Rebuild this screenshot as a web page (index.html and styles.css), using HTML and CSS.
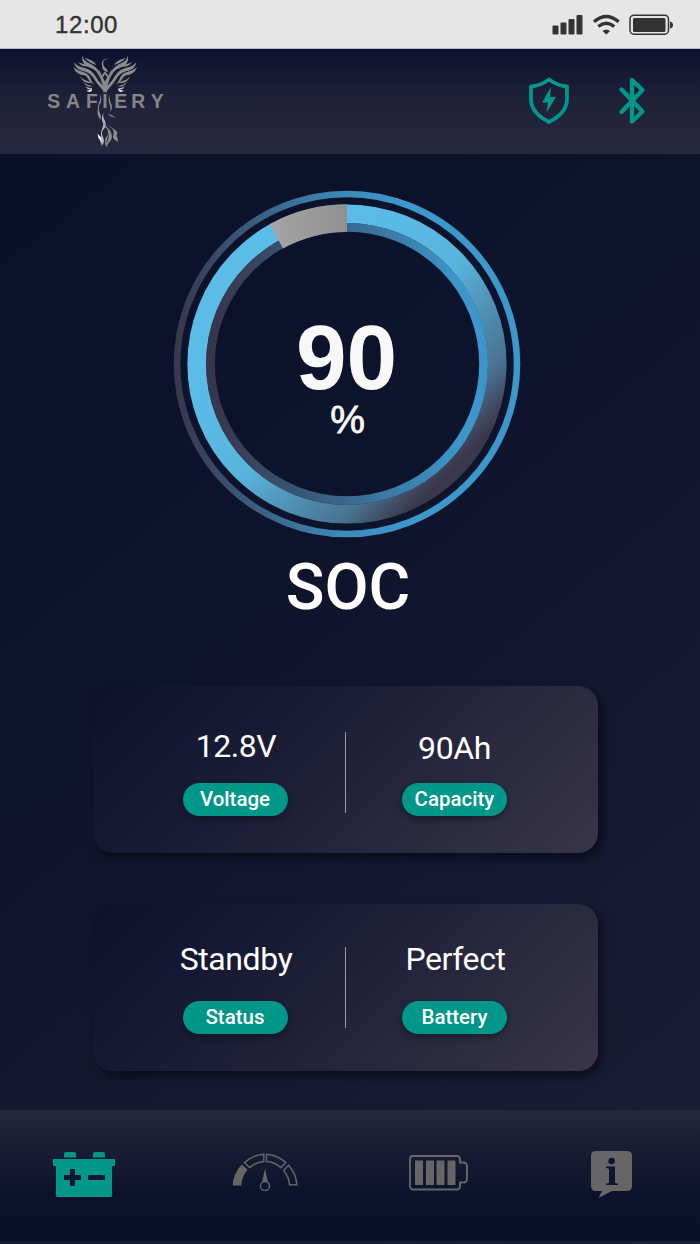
FILE: index.html
```html
<!DOCTYPE html>
<html lang="en">
<head>
    <meta charset="UTF-8">
    <meta name="viewport" content="width=device-width, initial-scale=1.0">
    <title>Safiery Battery</title>
    <link rel="stylesheet" href="styles.css">
</head>
<body>
    <div class="status-bar">
        <span class="time">12:00</span>
        <svg class="status-icons" width="122" height="22" viewBox="0 0 122 22">
            <g fill="#333">
                <rect x="0.5" y="12.5" width="6" height="9" rx="1"/>
                <rect x="8.5" y="9.5" width="6" height="12" rx="1"/>
                <rect x="16.5" y="6" width="6" height="15.5" rx="1"/>
                <rect x="24.5" y="2" width="6" height="19.5" rx="1"/>
                <path d="M50.500 18q3.800-3 7.600 0l-3.800 3.500z"/>
                <rect x="81" y="5" width="32.500" height="14" rx="1.500"/>
                <path d="M118 8.500q3 .8 3 3.500t-3 3.500z"/>
            </g>
            <g fill="none" stroke="#333">
                <path d="M42 8.800Q54.300-1.800 66.600 8.800" stroke-width="3.400"/>
                <path d="M46.300 13.500Q54.300 7.200 62.300 13.500" stroke-width="3.400"/>
                <rect x="78" y="2.200" width="38.500" height="19" rx="4" stroke-width="1.500"/>
            </g>
        </svg>
    </div>

    <header class="header">
        <svg class="logo" width="150" height="104" viewBox="0 12 450 312">
            <defs>
                <!-- one wing, mirrored for the other side -->
                <g id="wing">
                    <path d="M158 30C158 52 182 54 195 65C211 78 212 94 222 116C207 98 206 83 190 73C172 63 151 58 158 30z"/>
                    <path d="M132 52C145 69 166 66 180 76C199 89 206 117 226 137C202 127 193 93 174 83C153 76 138 76 132 52z"/>
                    <path d="M164 38C176 43 192 46 199 60C186 55 174 51 164 38z"/>
                    <path d="M130 65C146 81 163 78 173 88C184 98 181 108 194 119C173 111 176 95 163 91C149 88 137 86 130 65z"/>
                    <path d="M144 51C156 58 172 57 183 66C169 66 154 65 144 51z"/>
                    <path d="M205 73C218 87 214 107 225 117C231 128 228 137 222 144C215 124 198 113 191 99C205 105 213 116 219 122C211 105 212 90 205 73z"/>
                    <path d="M151 93C159 107 175 107 187 114C171 116 156 110 151 93z"/>
                    <path d="M160 108C165 120 179 120 188 124C175 128 164 122 160 108z"/>
                    <path d="M167 123C171 130 181 128 187 132C177 136 169 132 167 123z" fill="#bbb"/>
                    <path d="M168 137Q182 137 185 130Q189 140 178 141z" fill="#eee"/>
                </g>
            </defs>
            <g class="bird">
                <use href="#wing"/>
                <use href="#wing" transform="translate(451 0) scale(-1 1)"/>
                <!-- head and neck -->
                <path d="M242 43C234 41 224 42 220 50C218 59 223 67 231 73L234 82C225 79 216 76 217 64L215 56C216 45 228 38 242 43z"/>
                <path d="M225 79L239 96L225 123L211 96zM225 88L218 97L225 110L232 97z" fill-rule="evenodd"/>
                <path d="M211 147Q213 163 206 177Q200 190 208 201Q203 184 212 174Q216 163 211 147zM239 147Q236 162 244 178Q249 190 241 200Q243 185 238 175Q233 163 239 147z"/>
                <path d="M208 179C201 203 219 208 211 224C205 214 197 204 208 179zM235 204C238 211 250 209 257 219C247 214 236 215 235 204z"/>
                <path d="M225 198C210 218 231 226 227 244C224 253 212 256 217 271C223 285 225 292 214 304C220 291 203 283 203 266C207 275 214 275 214 275C209 255 223 247 219 235C214 220 214 212 225 198z" fill="#b8b8b8"/>
                <path d="M219 228C218 248 239 248 233 267C229 280 220 281 229 307C236 287 249 286 245 269C243 252 226 246 219 228zM232 233C239 252 256 249 250 270C245 282 256 284 263 291C267 276 254 275 263 264C258 251 240 250 232 233z"/>
                <path d="M203 266Q214 276 214 288L213 303Q214 287 206 280z" fill="#fff"/>
                <path d="M234 264Q237 275 230 293" fill="none" stroke="#24263c" stroke-width="3"/>
            </g>
            <text class="logo-text" y="190" x="52 108 168 217 253 304 362">SAFIERY</text>
        </svg>
        <div class="header-icons">
            <svg width="42" height="48" viewBox="0 0 42 48">
                <path d="M21 2.500Q30 9 39 9.500V22Q39 36 21 45Q3 36 3 22V9.500Q12 9 21 2.500z" fill="none" stroke="#009688" stroke-width="3.800" stroke-linejoin="round"/>
                <path d="M23 10L14 25.500H20L18.500 35.500L28 20H22z" fill="#009688"/>
            </svg>
            <svg width="28" height="48" viewBox="0 0 28 48">
                <path d="M3.500 12.500L24.500 34.500L14 44.500V3L24.500 13L3.500 35" fill="none" stroke="#009688" stroke-width="4.400" stroke-linecap="round" stroke-linejoin="round"/>
            </svg>
        </div>
    </header>

    <main class="content">
        <!-- state of charge dial -->
        <div class="dial">
            <svg width="348" height="348" viewBox="-174 -174 348 348">
                <defs>
                    <linearGradient id="outer" gradientUnits="userSpaceOnUse" x1="-174" y1="0" x2="60" y2="0">
                        <stop offset="0" stop-color="#38364d"/>
                        <stop offset="0.1" stop-color="#38405a"/>
                        <stop offset="0.72" stop-color="#3c8ab8"/>
                        <stop offset="1" stop-color="#3c98cb"/>
                    </linearGradient>
                    <linearGradient id="inner" gradientUnits="userSpaceOnUse" x1="-132" y1="0" x2="110" y2="0">
                        <stop offset="0" stop-color="#38364d"/>
                        <stop offset="0.55" stop-color="#3a698f"/>
                        <stop offset="1" stop-color="#3c96c9"/>
                    </linearGradient>
                    <linearGradient id="charge" gradientUnits="userSpaceOnUse" x1="-70" y1="-70" x2="104" y2="104">
                        <stop offset="0" stop-color="#5bbce8"/>
                        <stop offset="0.42" stop-color="#59b4dd"/>
                        <stop offset="0.84" stop-color="#48728f"/>
                        <stop offset="1" stop-color="#3b384d"/>
                    </linearGradient>
                    <linearGradient id="rest">
                        <stop offset="0" stop-color="#a5a5a5"/>
                        <stop offset="1" stop-color="#909090"/>
                    </linearGradient>
                </defs>
                <circle r="170" fill="none" stroke="url(#outer)" stroke-width="6.600"/>
                <circle r="150.200" fill="none" stroke="url(#charge)" stroke-width="18.800"/>
                <circle r="136.600" fill="none" stroke="url(#inner)" stroke-width="8.800"/>
                <path d="M-77.300-139.800A159.700 159.700 0 0 1 0-159.700V-132.100A132.100 132.100 0 0 0-63.900-115.600z" fill="url(#rest)"/>
            </svg>
            <div class="dial-value">
                <span class="number">90</span>
                <span class="unit">%</span>
            </div>
        </div>
        <h1 class="dial-title">SOC</h1>

        <section class="card">
            <div class="item">
                <span class="value voltage">12.8V</span>
                <span class="pill">Voltage</span>
            </div>
            <div class="divider"></div>
            <div class="item">
                <span class="value amps">90Ah</span>
                <span class="pill">Capacity</span>
            </div>
        </section>

        <section class="card">
            <div class="item">
                <span class="value word">Standby</span>
                <span class="pill">Status</span>
            </div>
            <div class="divider second"></div>
            <div class="item">
                <span class="value word">Perfect</span>
                <span class="pill">Battery</span>
            </div>
        </section>
    </main>

    <nav class="tab-bar">
        <svg class="tab tab-battery" width="64" height="48" viewBox="0 0 64 48">
            <path fill="#009688" fill-rule="evenodd" d="M1 9H63V16H60V45.500Q60 47 58.500 47H5.500Q4 47 4 45.500V16H1zM18 19V25H13Q12 25 12 26V29Q12 30 13 30H18V35Q18 36 19 36H22Q23 36 23 35V30H28Q29 30 29 29V26Q29 25 28 25H23V20Q23 19 22 19H19Q18 19 18 20zM37 25Q36 25 36 26V29Q36 30 37 30H52Q53 30 53 29V26Q53 25 52 25z"/>
            <path fill="#009688" d="M12 7.500V4Q12 2 14 2H22Q24 2 24 4V7.500zM41 7.500V4Q41 2 43 2H51Q53 2 53 4V7.500z"/>
        </svg>
        <svg class="tab tab-gauge" width="68" height="40" viewBox="0 0 68 40">
            <g fill="none" stroke="#666" stroke-width="1.500">
                <path d="M13.400 11.600A32 32 0 0 1 32.800 3.200V10.600A24 24 0 0 0 18.600 16.600z"/>
                <path d="M35.500 3.200A32 32 0 0 1 54.800 11.600L49.700 16.600A24 24 0 0 0 35.500 10.600z"/>
                <path d="M57.500 14.300A32 32 0 0 1 65.900 33.700H58.500A25 25 0 0 0 52.600 19.500z"/>
                <circle cx="34" cy="35" r="4.500"/>
            </g>
            <path fill="#666" d="M10.800 13.500L16.500 18.800A25 25 0 0 0 10.300 34.400H1.700A32 32 0 0 1 10.800 13.500zM34 17.500L37 31.500Q34 28.500 31 31.500z"/>
        </svg>
        <svg class="tab tab-cell" width="60" height="38" viewBox="0 0 60 38">
            <path fill="none" stroke="#666" stroke-width="1.900" d="M4 2H48Q51 2 51 5V8.500H54Q58 8.500 58 12.500V25Q58 28.500 54 28.500H51V32Q51 35.500 48 35.500H4Q1 35.500 1 32V5Q1 2 4 2z"/>
            <path fill="#666" d="M6 6.500H14V31H6zM17 6.500H25V31H17zM27.500 6.500H35.500V31H27.500zM38.500 6.500H46.500V31H38.500z"/>
        </svg>
        <svg class="tab tab-info" width="42" height="48" viewBox="0 0 42 48">
            <path fill="#666" d="M6 1H37Q42 1 42 6V36Q42 41 37 41H22L8.500 48L12 41H6Q1 41 1 36V6Q1 1 6 1z"/>
            <circle cx="21.600" cy="11" r="3.300" fill="#10152e"/>
            <path fill="#10152e" d="M16 16.500H25V32.500Q25 33.500 28 33.500V35H16V33.500Q19 33.500 19 32.500V20Q19 18 16 18z"/>
        </svg>
    </nav>
</body>
</html>
```
FILE: styles.css
```css
* {
    margin: 0;
    padding: 0;
    box-sizing: border-box;
}

body {
    width: 700px;
    height: 1244px;
    display: flex;
    flex-direction: column;
    background: linear-gradient(140deg, #0b102a 0%, #0f142d 45%, #1b1e37 100%);
    font-family: Roboto, sans-serif;
    color: #fff;
    overflow: hidden;
}

svg {
    display: block;
}

.status-bar {
    height: 49px;
    flex: none;
    display: flex;
    justify-content: space-between;
    padding: 13px 26px 0 55px;
    background: #e6e6e6;
    border-bottom: 1px solid #b4b5bd;
}

.time {
    font: 24px/24px "Liberation Sans", sans-serif;
    letter-spacing: 0.6px;
    color: #333;
    -webkit-text-stroke: 0.4px #333;
}

/* Header */
.header {
    height: 105px;
    flex: none;
    display: flex;
    justify-content: space-between;
    padding: 0 54px 0 30px;
    background: linear-gradient(180deg, #0c112d 0%, #202239 50%, #27273e 100%);
}

.bird {
    fill: #8c8c8c;
}

.logo-text {
    font: bold 58px "Liberation Sans", sans-serif;
    fill: #868686;
}

.header-icons {
    display: flex;
    gap: 48px;
    padding-top: 28px;
}

.content {
    flex: 1;
    min-height: 0;
    display: flex;
    flex-direction: column;
    align-items: center;
    padding: 36px 9px 0 0;
}

/* Dial */
.dial {
    display: grid;
    flex: none;
    width: 348px;
    margin-left: 2px;
}

.dial > * {
    grid-area: 1 / 1;
}

.dial-value {
    display: flex;
    flex-direction: column;
    align-items: center;
    padding-top: 127px;
    font-family: "Liberation Sans", sans-serif;
    color: #f8f8f8;
}

.number {
    font-size: 91px;
    font-weight: bold;
    line-height: 82px;
}

.unit {
    font-size: 39px;
    line-height: 40px;
    padding-left: 2px;
    margin-top: 1px;
    -webkit-text-stroke: 0.8px #f8f8f8;
}

.dial-title {
    margin: 12px 0 61px 5px;
    font-size: 64px;
    line-height: 75px;
    font-weight: 500;
}

/* Cards */
.card {
    width: 505px;
    height: 167px;
    flex: none;
    margin-bottom: 50.500px;
    padding: 42px 37px 0 89px;
    display: grid;
    grid-template-columns: 163px 1px 1fr;
    border-radius: 20px;
    background: linear-gradient(135deg, #0c112d 0%, #1e1f38 45%, #2c2b40 76%, #39354b 100%);
    box-shadow: 4px 5px 10px rgba(0, 0, 0, 0.5);
}

.card:last-child {
    margin-bottom: 0;
}

.item {
    display: flex;
    flex-direction: column;
    align-items: center;
}

.item:first-child {
    padding-right: 57px;
}

.item:last-child {
    padding-left: 2px;
}

.value {
    height: 55px;
    font-size: 32px;
    line-height: 40px;
    white-space: nowrap;
}

.voltage {
    margin: -2px 0 2px 2px;
    letter-spacing: -0.5px;
}

.amps {
    letter-spacing: -0.4px;
}

.word {
    margin: -7px 0 7px 2px;
    letter-spacing: -0.4px;
}

.divider {
    width: 1px;
    height: 81px;
    margin-top: 4px;
    background: #9c9ca8;
}

.divider.second {
    margin-top: 1px;
}

.pill {
    width: 105px;
    height: 33px;
    border-radius: 17px;
    background: #009688;
    font-size: 20.500px;
    font-weight: 500;
    line-height: 33px;
    text-align: center;
    box-shadow: 0 3px 6px rgba(0, 0, 0, 0.35);
}

/* Bottom tabs */
.tab-bar {
    height: 131px;
    flex: none;
    margin-bottom: 3px;
    padding: 40px 68px 0 52px;
    display: flex;
    justify-content: space-between;
    align-items: flex-start;
    background: linear-gradient(180deg, #26273d 0%, #191c34 30%, #0e132d 62%, #0b1029 100%);
}

.tab-gauge {
    margin-top: 1px;
}

.tab-cell {
    margin: 4px 6px 0 -6px;
}
```
